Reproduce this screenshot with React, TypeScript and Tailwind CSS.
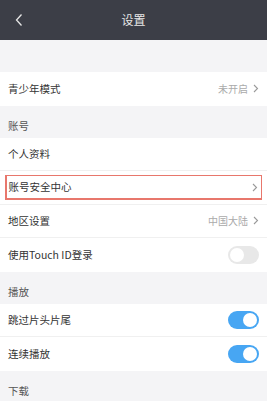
import React from "react";

const Chevron = () => (
  <svg width="6" height="9" viewBox="0 0 6 9" className="ml-[5px]">
    <path d="M1 1 L4.5 4.5 L1 8" fill="none" stroke="#9a9a9a" strokeWidth="1.1" />
  </svg>
);

const Toggle = ({ on }: { on: boolean }) => (
  <div
    className={`w-[31px] h-[18px] rounded-full p-[2px] flex items-center ${
      on ? "bg-[#47a6f3] justify-end" : "bg-[#e8e8e8] justify-start"
    }`}
  >
    <div className="w-[14px] h-[14px] rounded-full bg-white" />
  </div>
);

const Row = ({
  label,
  value,
  chevron,
  toggle,
  border = true,
}: {
  label: string;
  value?: string;
  chevron?: boolean;
  toggle?: boolean | null;
  border?: boolean;
}) => (
  <div className={`h-[33.5px] flex items-center pl-[8px] pr-[8px] bg-white ${border ? "border-b border-[#f0f0f0]" : ""}`}>
    <span className="text-[10.5px] text-[#333]">{label}</span>
    <div className="ml-auto flex items-center">
      {value && <span className="text-[10px] text-[#aaa]">{value}</span>}
      {chevron && <Chevron />}
      {toggle !== undefined && toggle !== null && <Toggle on={toggle} />}
    </div>
  </div>
);

const Section = ({ label }: { label: string }) => (
  <div className="h-[32px] bg-[#f4f4f6] flex items-end pl-[8px] pb-[4px]">
    <span className="text-[10.5px] text-[#555]">{label}</span>
  </div>
);

export default function App() {
  return (
    <div
      className="w-[271px] h-[401px] bg-white overflow-hidden"
      style={{ fontFamily: '"Noto Sans CJK SC", "Noto Sans", sans-serif' }}
    >
      <div className="w-[267px]">
        <div className="h-[40px] bg-[#3c3e47] flex items-center relative">
          <svg width="10" height="14" viewBox="0 0 10 14" className="ml-[14px]">
            <path d="M7.5 1.5 L2.5 7 L7.5 12.5" fill="none" stroke="#e6e6e6" strokeWidth="1.3" />
          </svg>
          <span className="absolute left-0 right-0 text-center text-[12px] text-[#e8e8e8] pointer-events-none">
            设置
          </span>
        </div>
        <div className="h-[32px] bg-[#f4f4f6]" />
        <Row label="青少年模式" value="未开启" chevron border={false} />
        <Section label="账号" />
        <Row label="个人资料" />
        <div className="h-[33.5px] bg-white border-b border-[#f0f0f0] flex items-center px-[5px]">
          <div className="w-full h-[25px] bg-[#e8776c] p-[1.5px]">
            <div className="w-full h-full bg-white flex items-center pl-[2px] pr-[3px]">
              <span className="text-[10.5px] text-[#333]">账号安全中心</span>
              <div className="ml-auto flex items-center">
                <Chevron />
              </div>
            </div>
          </div>
        </div>
        <Row label="地区设置" value="中国大陆" chevron />
        <Row label="使用Touch ID登录" toggle={false} border={false} />
        <Section label="播放" />
        <Row label="跳过片头片尾" toggle={true} />
        <Row label="连续播放" toggle={true} border={false} />
        <Section label="下载" />
      </div>
    </div>
  );
}
